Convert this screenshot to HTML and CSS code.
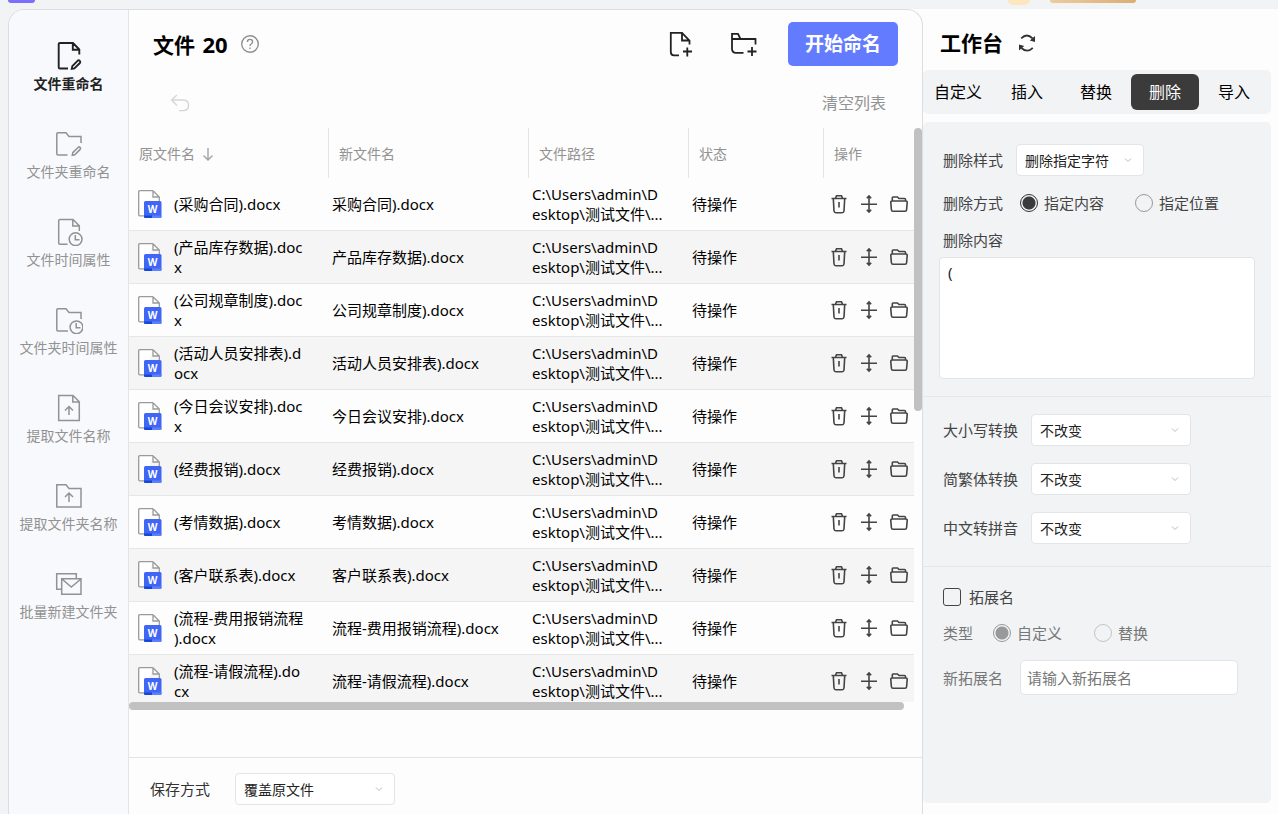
FILE: index.html
```html
<!DOCTYPE html>
<html lang="zh-CN">
<head>
    <meta charset="UTF-8">
    <meta name="viewport" content="width=device-width, initial-scale=1.0">
    <title>文件重命名</title>
    <link rel="stylesheet" href="styles.css">
</head>
<body>
    <!-- Shared icons -->
    <svg class="sprite" aria-hidden="true">
        <symbol id="icon-trash" viewBox="0 0 20 20">
            <path d="M2.5 4.5H17.5M6.5 4.2L7.5 1.8H12.5L13.5 4.2M4.3 4.5L5 17Q5.2 18.7 6.8 18.7H13.2Q14.8 18.7 15 17L15.7 4.5M10 8V13.5"/>
        </symbol>
        <symbol id="icon-move" viewBox="0 0 20 20">
            <path d="M2 10.2H18M10 2.5V17.5M7.8 4.2L10 2L12.2 4.2M7.8 15.8L10 18L12.2 15.8"/>
        </symbol>
        <symbol id="icon-open" viewBox="0 0 20 20">
            <path d="M3.3 7V3.7Q3.3 3 4 3H8.5L10 4.5H15.5Q16.5 4.5 16.5 5.5V7M3.3 7H16.7Q18.3 7 18.2 8.6L17.6 15.8Q17.5 17.3 16 17.3H4Q2.5 17.3 2.4 15.8L1.8 8.6Q1.7 7 3.3 7Z"/>
        </symbol>
        <symbol id="icon-chevron" viewBox="0 0 8 8">
            <path d="M1 2.5L4 5.5L7 2.5"/>
        </symbol>
    </svg>

    <div class="topbar">
        <span class="logo"></span>
        <span class="avatar"></span>
        <span class="vip"></span>
    </div>

    <div class="shell">
        <div class="main-panel">
            <nav class="sidebar">
                <a href="#" class="nav-item active">
                    <svg viewBox="0 0 28 28"><path d="M13 26.5H5Q3.7 26.5 3.7 25.2V2.2Q3.7 1 5 1H18L24.3 7.5V12.5M17.8 1V7.8H24.3M17.3 24.2L22.8 18.6Q23.8 17.8 24.8 18.8T24.9 21L19.4 26.4L16.8 26.8Z"/></svg>
                    <span>文件重命名</span>
                </a>
                <a href="#" class="nav-item">
                    <svg viewBox="0 0 28 28"><path d="M12.5 25H3Q1.8 25 1.8 23.8V3.7Q1.8 2.7 3 2.7H11L14 6.5H26V13M17.8 22.6L23.3 17.2Q24.2 16.5 25.1 17.4T25.2 19.4L19.8 24.7L17.3 25.2Z"/></svg>
                    <span>文件夹重命名</span>
                </a>
                <a href="#" class="nav-item">
                    <svg viewBox="0 0 28 28"><path d="M12.6 26.3H5Q3.7 26.3 3.7 25V2.6Q3.7 1.4 5 1.4H18L24.3 7.8V13M17.8 1.4V8H24.3"/><circle cx="20.6" cy="21.2" r="6.4"/><path d="M20.3 17V21.8H24.5"/></svg>
                    <span>文件时间属性</span>
                </a>
                <a href="#" class="nav-item">
                    <svg viewBox="0 0 28 28"><path d="M13 25H3Q1.8 25 1.8 23.8V3.7Q1.8 2.7 3 2.7H11L14 6.5H26V13"/><circle cx="21.5" cy="21.3" r="6.4"/><path d="M21.2 17V21.8H25.5"/></svg>
                    <span>文件夹时间属性</span>
                </a>
                <a href="#" class="nav-item">
                    <svg viewBox="0 0 28 28"><path d="M3.7 1.5H18L24.3 7.8V26.5H3.7ZM17.8 1.5V8H24.3M14 21V13M10 16.5L14 12.5L18 16.5"/></svg>
                    <span>提取文件名称</span>
                </a>
                <a href="#" class="nav-item">
                    <svg viewBox="0 0 28 28"><path d="M1.8 2.7H11L14 6.5H26V25H1.8ZM14 20V11.5M10 15L14 11L18 15"/></svg>
                    <span>提取文件夹名称</span>
                </a>
                <a href="#" class="nav-item">
                    <svg viewBox="0 0 28 28"><path d="M6.5 19.3H1.7V3.7H21.3V8.5M6.7 8.8H26V24.3H6.7ZM7 9L16.3 17L26 9"/></svg>
                    <span>批量新建文件夹</span>
                </a>
            </nav>

            <main class="content">
                <header class="content-header">
                    <h1>文件 <span class="count">20</span></h1>
                    <button class="icon-btn help" aria-label="帮助">
                        <svg viewBox="0 0 20 20"><circle cx="10" cy="10" r="8.3"/><path d="M7.4 8Q7.4 5.4 10 5.4T12.6 7.8Q12.6 9.2 11.2 10Q10 10.7 10 12M10 13.4V15"/></svg>
                    </button>
                    <button class="icon-btn add-btn add-file" aria-label="添加文件">
                        <svg viewBox="0 0 28 28"><path d="M13 25.3H8Q4.8 25.3 4.8 22V2.8H16L23.5 10.5V14.5M16 3V10.5H23.5M21.3 17.5V26.5M17 21.5H26"/></svg>
                    </button>
                    <button class="icon-btn add-btn" aria-label="添加文件夹">
                        <svg viewBox="0 0 28 28"><path d="M13.5 22.8H6Q2 22.8 2 18.8V3.8H8L10.5 9H25.5V14.5M2 9H10.5M22 17V26M17.5 21.5H26.5"/></svg>
                    </button>
                    <button class="start-btn">开始命名</button>
                </header>

                <div class="toolbar">
                    <button class="icon-btn undo" aria-label="撤销">
                        <svg viewBox="0 0 20 20"><path d="M7 2L1.5 7L7 12.5M1.5 7H13.5Q18.5 7 18.5 12.3T13.5 17.6H9"/></svg>
                    </button>
                    <button class="clear-btn">清空列表</button>
                </div>

                <div class="list-area">
                    <div class="table-view">
                        <table class="file-table">
                            <colgroup>
                                <col class="col-name">
                                <col>
                                <col class="col-path">
                                <col class="col-status">
                                <col class="col-actions">
                            </colgroup>
                            <thead>
                                <tr>
                                    <th>原文件名 <svg class="sort-icon" viewBox="0 0 14 14"><path d="M7 1V13M2.5 8.5L7 13L11.5 8.5"/></svg></th>
                                    <th>新文件名</th>
                                    <th>文件路径</th>
                                    <th>状态</th>
                                    <th>操作</th>
                                </tr>
                            </thead>
                            <tbody id="file-rows"></tbody>
                        </table>
                    </div>
                    <div class="scrollbar-y"></div>
                    <div class="scrollbar-x"></div>
                </div>

                <footer class="content-footer">
                    <label for="save-mode">保存方式</label>
                    <span class="select wide">
                        <select id="save-mode"><option>覆盖原文件</option></select>
                        <svg><use href="#icon-chevron"/></svg>
                    </span>
                </footer>
            </main>
        </div>

        <aside class="workbench">
            <div class="workbench-header">
                <h2>工作台</h2>
                <button class="icon-btn refresh" aria-label="重置">
                    <svg viewBox="0 0 20 20"><path d="M4.2 5.4Q9.8 -.4 15.6 5.4M4.4 15Q10.2 20.4 15.8 14.8"/><path class="solid" d="M18 3V9L12.8 7.4ZM2 17.4V11.4L7.2 13Z"/></svg>
                </button>
            </div>

            <div class="tabs">
                <button>自定义</button>
                <button>插入</button>
                <button>替换</button>
                <button class="active">删除</button>
                <button>导入</button>
            </div>

            <form class="settings">
                <section class="group delete-group">
                    <div class="row">
                        <label for="delete-style">删除样式</label>
                        <span class="select small">
                            <select id="delete-style"><option>删除指定字符</option></select>
                            <svg><use href="#icon-chevron"/></svg>
                        </span>
                    </div>
                    <div class="row radio-row">
                        <span>删除方式</span>
                        <label class="radio"><input type="radio" name="delete-by" checked>指定内容</label>
                        <label class="radio"><input type="radio" name="delete-by">指定位置</label>
                    </div>
                    <label class="text-label" for="delete-text">删除内容</label>
                    <textarea id="delete-text">(</textarea>
                </section>

                <section class="group convert-group">
                    <div class="row">
                        <label for="case-mode">大小写转换</label>
                        <span class="select wide">
                            <select id="case-mode"><option>不改变</option></select>
                            <svg><use href="#icon-chevron"/></svg>
                        </span>
                    </div>
                    <div class="row">
                        <label for="script-mode">简繁体转换</label>
                        <span class="select wide">
                            <select id="script-mode"><option>不改变</option></select>
                            <svg><use href="#icon-chevron"/></svg>
                        </span>
                    </div>
                    <div class="row">
                        <label for="pinyin-mode">中文转拼音</label>
                        <span class="select wide">
                            <select id="pinyin-mode"><option>不改变</option></select>
                            <svg><use href="#icon-chevron"/></svg>
                        </span>
                    </div>
                </section>

                <section class="group ext-group">
                    <label class="check"><input type="checkbox" id="ext-toggle">拓展名</label>
                    <div class="row type-row disabled">
                        <span>类型</span>
                        <label class="radio"><input type="radio" name="ext-type" checked>自定义</label>
                        <label class="radio"><input type="radio" name="ext-type">替换</label>
                    </div>
                    <div class="row ext-row">
                        <label for="new-ext">新拓展名</label>
                        <input type="text" id="new-ext" placeholder="请输入新拓展名">
                    </div>
                </section>
            </form>
        </aside>
    </div>

    <script>
        // "|" marks where the long names wrap
        const FILES = [
            "(采购合同).docx",
            "(产品库存数据).doc|x",
            "(公司规章制度).doc|x",
            "(活动人员安排表).d|ocx",
            "(今日会议安排).doc|x",
            "(经费报销).docx",
            "(考情数据).docx",
            "(客户联系表).docx",
            "(流程-费用报销流程|).docx",
            "(流程-请假流程).do|cx"
        ];

        const WORD_ICON = `<svg class="word-icon" viewBox="0 0 24 28">
            <path class="page" d="M15 .7H1.8Q.7 .7 .7 1.8V24.7Q.7 25.8 1.8 25.8H6M15 .7L21.3 7V11M15 .7V7H21.3"/>
            <rect x="6" y="11" width="17.5" height="17" rx="1.5" fill="#3f66f5"/>
            <path d="M6 25.5H14V28H7.5Q6 28 6 26.5Z" fill="#1646dc"/>
            <path d="M14 25.5H23.5V26.5Q23.5 28 22 28H14Z" fill="#5b80fa"/>
            <text x="14.7" y="22.5">W</text>
        </svg>`;

        function icon(name) {
            return `<svg><use href="#icon-${name}"/></svg>`;
        }

        // New name is the old one without the "("
        function renderRow(file) {
            const oldName = file.replace("|", "<br>");
            const newName = file.replace("|", "").replace("(", "");
            return `<tr>
                <td><div class="file-name">${WORD_ICON}<span>${oldName}</span></div></td>
                <td>${newName}</td>
                <td>C:\\Users\\admin\\D<br>esktop\\测试文件\\...</td>
                <td>待操作</td>
                <td><div class="actions">
                    <button class="icon-btn" aria-label="删除">${icon("trash")}</button>
                    <button class="icon-btn" aria-label="移动">${icon("move")}</button>
                    <button class="icon-btn" aria-label="打开文件夹">${icon("open")}</button>
                </div></td>
            </tr>`;
        }

        document.getElementById("file-rows").innerHTML = FILES.map(renderRow).join("");
    </script>
</body>
</html>
```
FILE: styles.css
```css
* {
    box-sizing: border-box;
}
body {
    margin: 0;
    height: 100vh;
    display: flex;
    flex-direction: column;
    overflow: hidden;
    background-color: #f1f3f5;
    color: #000;
    font-family: "Noto Sans", "Noto Sans CJK SC", sans-serif;
    font-size: 15px;
    line-height: 20px;
}
button, input, select, textarea {
    font: inherit;
    color: inherit;
    margin: 0;
}
button {
    padding: 0;
    border: none;
    background: none;
    cursor: pointer;
}
svg {
    display: block;
    fill: none;
    stroke: currentColor;
}
h1, h2 {
    margin: 0;
    font-size: 21px;
    line-height: 28px;
    font-weight: 700;
}
.sprite {
    position: absolute;
    width: 0;
    height: 0;
}

/* Top bar */
.topbar {
    flex: none;
    height: 9px;
    display: flex;
    align-items: flex-start;
    padding: 0 142px 0 8px;
}
.logo {
    width: 27px;
    height: 3px;
    border-radius: 0 0 6px 6px;
    background-color: #7b6ffb;
}
.avatar {
    width: 22px;
    height: 5px;
    margin-left: auto;
    margin-right: 20px;
    border-radius: 0 0 11px 11px;
    background-color: #fde6c0;
}
.vip {
    width: 86px;
    height: 3px;
    border-radius: 0 0 8px 8px;
    background: linear-gradient(90deg, #eccba2, #dcae72);
}

/* Shell */
.shell {
    flex: 1;
    min-height: 0;
    display: flex;
    padding-left: 8px;
}
.main-panel {
    flex: 1;
    min-width: 0;
    display: flex;
    position: relative;
    z-index: 1;
    overflow: hidden;
    border: 1px solid #dcdddf;
    border-bottom: none;
    border-radius: 16px 16px 0 0;
    background-color: #fdfdfd;
}

/* Sidebar */
.sidebar {
    flex: none;
    width: 120px;
    display: flex;
    flex-direction: column;
    gap: 36px;
    padding-top: 32px;
    border-right: 1px solid #e3e4e6;
    background-color: #f8f9fc;
}
.nav-item {
    display: flex;
    flex-direction: column;
    align-items: center;
    gap: 4px;
    color: #929292;
    font-size: 14px;
    text-decoration: none;
}
.nav-item svg {
    width: 28px;
    height: 28px;
    stroke-width: 1.5;
}
.nav-item.active {
    color: #222;
    font-weight: 700;
}
.nav-item.active svg {
    stroke-width: 1.9;
}

/* Content */
.content {
    flex: 1;
    min-width: 0;
    display: flex;
    flex-direction: column;
}
.content-header {
    display: flex;
    align-items: center;
    height: 68px;
    padding: 0 24px;
}
.count {
    margin-left: 2px;
    font-size: 22px;
}
.help {
    margin-left: 12px;
    color: #8f8f8f;
}
.help svg,
.refresh svg,
.undo svg {
    width: 20px;
    height: 20px;
    stroke-width: 1.4;
}
.add-btn {
    margin-right: 30px;
    color: #222;
}
.add-file {
    margin-left: auto;
    margin-right: 36px;
}
.add-btn svg {
    width: 28px;
    height: 28px;
    stroke-width: 1.8;
}
.start-btn {
    width: 110px;
    height: 44px;
    border-radius: 5px;
    background-color: #637bff;
    color: #fff;
    font-size: 19px;
    font-weight: 700;
}
.toolbar {
    display: flex;
    align-items: center;
    justify-content: space-between;
    height: 50px;
    padding: 0 36px 0 41px;
}
.undo {
    color: #d6d6d6;
}
.clear-btn {
    color: #929292;
    font-size: 16px;
}

/* File list */
.list-area {
    flex: 1;
    min-height: 0;
    display: grid;
    grid-template: minmax(0, 1fr) 8px / minmax(0, 1fr) 8px;
    margin-bottom: 47px;
}
.table-view {
    overflow: hidden;
}
.scrollbar-y,
.scrollbar-x {
    border-radius: 4px;
    background-color: #c1c1c1;
}
.scrollbar-y {
    height: 283px;
}
.scrollbar-x {
    margin-right: 10px;
}
.file-table {
    width: 100%;
    min-width: 795px;
    table-layout: fixed;
    border-collapse: separate;
    border-spacing: 0;
}
.col-name {
    width: 200px;
}
.col-path {
    width: 160px;
}
.col-status {
    width: 135px;
}
.col-actions {
    width: 100px;
}
.file-table th {
    height: 50px;
    padding: 2px 10px 0;
    border-right: 1px solid #e4e4e4;
    color: #929292;
    font-size: 14px;
    font-weight: 400;
    text-align: left;
}
.sort-icon {
    display: inline-block;
    width: 14px;
    height: 14px;
    margin-left: 2px;
    vertical-align: -2px;
    color: #a8a8a8;
    stroke-width: 1.5;
}
.file-table td {
    height: 53px;
    padding: 0 3px;
    border-bottom: 1px solid #e6e6e6;
    white-space: nowrap;
}
.file-table tr:nth-child(even) td {
    background-color: #f5f5f5;
}
.file-name {
    display: flex;
    align-items: center;
    gap: 12px;
    padding-left: 6px;
}
.word-icon {
    flex: none;
    width: 24px;
    height: 28px;
    stroke: none;
}
.word-icon .page {
    fill: #fff;
    stroke: #9a9a9a;
    stroke-width: 1.3;
}
.word-icon text {
    fill: #fff;
    font-size: 10px;
    font-weight: 700;
    text-anchor: middle;
}
.actions {
    display: flex;
    gap: 10px;
    padding-left: 2px;
    color: #444;
}
.actions svg {
    width: 20px;
    height: 20px;
    stroke-width: 1.6;
}

/* Footer */
.content-footer {
    display: flex;
    align-items: center;
    gap: 25px;
    height: 57px;
    padding: 6px 21px 0;
    border-top: 1px solid #e4e4e4;
    color: #333;
}

/* Selects */
.select {
    position: relative;
    width: 160px;
}
.select.small {
    width: 128px;
}
.select select {
    display: block;
    width: 100%;
    height: 32px;
    padding: 2px 8px 0;
    border: 1px solid #e2e4e7;
    border-radius: 4px;
    appearance: none;
    background-color: #fff;
    color: #222;
    font-size: 14px;
}
.select svg {
    position: absolute;
    top: 12px;
    right: 12px;
    width: 8px;
    height: 8px;
    color: #bbb;
    pointer-events: none;
}

/* Workbench */
.workbench {
    flex: none;
    width: 375px;
    margin-left: -20px;
    padding: 0 7px 11px 20px;
    display: flex;
    flex-direction: column;
    background-color: #fdfdfd;
}
.workbench-header {
    display: flex;
    align-items: center;
    gap: 14px;
    height: 61px;
    padding: 6px 17px 0;
}
.refresh {
    color: #333;
}
.refresh svg {
    stroke-width: 1.8;
}
.refresh .solid {
    fill: currentColor;
    stroke: none;
}
.tabs {
    display: flex;
    gap: 1px;
    padding: 4px 3px 4px 1px;
    border-radius: 5px;
    background-color: #f1f3f5;
}
.tabs button {
    flex: 1;
    height: 36px;
    border-radius: 6px;
    font-size: 16px;
}
.tabs .active {
    background-color: #3b3b3b;
    color: #fff;
}
.settings {
    flex: 1;
    margin-top: 8px;
    border-radius: 5px;
    background-color: #f1f3f5;
    color: #444;
}
.group {
    padding: 0 16px 0 20px;
}
.group + .group {
    border-top: 1px solid #e4e6e8;
}
.row {
    display: flex;
    align-items: center;
}
.radio,
.check {
    display: flex;
    align-items: center;
}
.radio {
    gap: 6px;
}
.radio input {
    appearance: none;
    width: 18px;
    height: 18px;
    border: 1px solid #999;
    border-radius: 50%;
}
.radio input:checked {
    border-color: #333;
    background: radial-gradient(circle, #3b3b3b 6px, transparent 7px);
}
.delete-group {
    padding-top: 22px;
    padding-bottom: 17px;
}
.delete-group .row {
    gap: 13px;
}
.delete-group .radio-row {
    gap: 17px;
    margin-top: 17px;
}
.radio-row .radio + .radio {
    margin-left: 14px;
}
.text-label {
    display: block;
    margin-top: 17px;
}
textarea {
    display: block;
    width: calc(100% + 4px);
    height: 122px;
    margin: 7px 0 0 -4px;
    padding: 4px 8px;
    border: 1px solid #e2e4e7;
    border-radius: 4px;
    background-color: #fff;
    color: #222;
    resize: none;
}
.convert-group {
    display: flex;
    flex-direction: column;
    gap: 17px;
    padding-top: 17px;
    padding-bottom: 22px;
}
.convert-group .row {
    gap: 13px;
}
.ext-group {
    padding-top: 20px;
}
.check {
    gap: 8px;
}
.check input {
    appearance: none;
    width: 18px;
    height: 18px;
    border: 1px solid #444;
    border-radius: 3px;
}
.type-row {
    gap: 20px;
    margin-top: 16px;
}
.type-row .radio + .radio {
    margin-left: 12px;
}
.disabled {
    color: #777;
}
.disabled .radio input {
    border-color: #c4c4c4;
}
.disabled .radio input:checked {
    border-color: #999;
    background: radial-gradient(circle, #999 6px, transparent 7px);
}
.ext-row {
    gap: 17px;
    margin-top: 17px;
    color: #777;
}
.ext-row input {
    width: 218px;
    height: 35px;
    padding: 0 6px;
    border: 1px solid #e2e4e7;
    border-radius: 5px;
    background-color: #fff;
}
.ext-row input::placeholder {
    color: #777;
}
```
